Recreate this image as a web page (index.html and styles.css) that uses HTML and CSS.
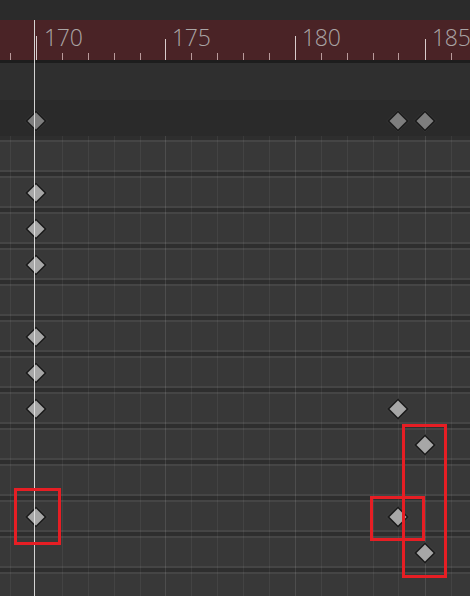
FILE: index.html
```html
<!DOCTYPE html>
<html>
<head>
<meta charset="utf-8">
<link rel="stylesheet" href="styles.css">
</head>
<body>
<div class="timeline">
  <div class="topbar"></div>
  <div class="ruler">
    <svg class="ticks" width="470" height="40" viewBox="0 0 470 40">
      <g stroke="#b99a9b" stroke-width="1">
        <line x1="10.5" y1="33" x2="10.5" y2="40"/>
        <line x1="62.5" y1="33" x2="62.5" y2="40"/>
        <line x1="88.5" y1="33" x2="88.5" y2="40"/>
        <line x1="114.5" y1="33" x2="114.5" y2="40"/>
        <line x1="140.5" y1="33" x2="140.5" y2="40"/>
        <line x1="191.5" y1="33" x2="191.5" y2="40"/>
        <line x1="217.5" y1="33" x2="217.5" y2="40"/>
        <line x1="243.5" y1="33" x2="243.5" y2="40"/>
        <line x1="269.5" y1="33" x2="269.5" y2="40"/>
        <line x1="321.5" y1="33" x2="321.5" y2="40"/>
        <line x1="347.5" y1="33" x2="347.5" y2="40"/>
        <line x1="373.5" y1="33" x2="373.5" y2="40"/>
        <line x1="398.5" y1="33" x2="398.5" y2="40"/>
        <line x1="451.5" y1="33" x2="451.5" y2="40"/>
      </g>
      <g stroke="#d9cccc" stroke-width="1">
        <line x1="36.5" y1="16" x2="36.5" y2="40"/>
        <line x1="165.5" y1="19" x2="165.5" y2="40"/>
        <line x1="295.5" y1="16" x2="295.5" y2="40"/>
        <line x1="425.5" y1="19" x2="425.5" y2="40"/>
      </g>
    </svg>
    <span class="label" style="left:44px">170</span>
    <span class="label" style="left:172px">175</span>
    <span class="label" style="left:302px">180</span>
    <span class="label" style="left:432px">185</span>
  </div>
  <div class="header-row"></div>
  <div class="summary-row">
    <i class="key key-dim" style="left:36px"></i>
    <i class="key key-dim" style="left:398px"></i>
    <i class="key key-dim" style="left:425px"></i>
  </div>
  <div class="tracks">
    <svg class="grid" width="470" height="460" viewBox="0 0 470 460">
      <g stroke="rgba(255,255,255,0.06)" stroke-width="1">
        <line x1="10.5" y1="0" x2="10.5" y2="460"/>
        <line x1="62.5" y1="0" x2="62.5" y2="460"/>
        <line x1="88.5" y1="0" x2="88.5" y2="460"/>
        <line x1="114.5" y1="0" x2="114.5" y2="460"/>
        <line x1="140.5" y1="0" x2="140.5" y2="460"/>
        <line x1="191.5" y1="0" x2="191.5" y2="460"/>
        <line x1="217.5" y1="0" x2="217.5" y2="460"/>
        <line x1="243.5" y1="0" x2="243.5" y2="460"/>
        <line x1="269.5" y1="0" x2="269.5" y2="460"/>
        <line x1="321.5" y1="0" x2="321.5" y2="460"/>
        <line x1="347.5" y1="0" x2="347.5" y2="460"/>
        <line x1="373.5" y1="0" x2="373.5" y2="460"/>
        <line x1="398.5" y1="0" x2="398.5" y2="460"/>
        <line x1="451.5" y1="0" x2="451.5" y2="460"/>
      </g>
      <g stroke="rgba(255,255,255,0.11)" stroke-width="1">
        <line x1="165.5" y1="0" x2="165.5" y2="460"/>
        <line x1="295.5" y1="0" x2="295.5" y2="460"/>
        <line x1="425.5" y1="0" x2="425.5" y2="460"/>
      </g>
    </svg>
    <div class="row"></div>
    <div class="row"><i class="key" style="left:36px"></i></div>
    <div class="row"><i class="key" style="left:36px"></i></div>
    <div class="row"><i class="key" style="left:36px"></i></div>
    <div class="row"></div>
    <div class="row"><i class="key" style="left:36px"></i></div>
    <div class="row"><i class="key" style="left:36px"></i></div>
    <div class="row"><i class="key" style="left:36px"></i><i class="key" style="left:398px"></i></div>
    <div class="row"><i class="key" style="left:425px"></i></div>
    <div class="row"></div>
    <div class="row"><i class="key" style="left:36px"></i><i class="key" style="left:398px"></i></div>
    <div class="row"><i class="key" style="left:425px"></i></div>
    <div class="row"></div>
  </div>
  <div class="playhead"></div>
  <div class="mark" style="left:14px;top:488px;width:47px;height:57px"></div>
  <div class="mark" style="left:370px;top:496px;width:55px;height:45px"></div>
  <div class="mark" style="left:402px;top:424px;width:45px;height:154px"></div>
</div>
</body>
</html>
```
FILE: styles.css
```css
* { box-sizing: border-box; }
html, body { margin: 0; padding: 0; background: #2b2b2b; }
.timeline {
  position: relative;
  width: 470px;
  height: 596px;
  overflow: hidden;
  display: flex;
  flex-direction: column;
  background: #2e2e2e;
  font-family: "Open Sans", "Liberation Sans", sans-serif;
}
.topbar { height: 20px; flex: none; background: #2b2b2b; }
.ruler {
  position: relative;
  height: 43px;
  flex: none;
  background: #4a2326;
  border-bottom: 3px solid #1d1d1d;
}
.ticks { position: absolute; left: 0; top: 0; display: block; }
.label {
  position: absolute;
  top: 6px;
  font-size: 23px;
  line-height: 23px;
  font-weight: 300;
  color: #aaa5a5;
  letter-spacing: -0.3px;
}
.header-row { height: 37px; flex: none; background: #2f2f2f; }
.summary-row {
  position: relative;
  height: 36px;
  flex: none;
  background: #2a2a2a;
}
.summary-row .key { top: 21px; }
.tracks {
  position: relative;
  flex: 1;
  display: flex;
  flex-direction: column;
  gap: 4px;
  padding-top: 4px;
  background: #2e2e2e;
}
.grid { position: absolute; left: 0; top: 0; z-index: 2; pointer-events: none; }
.row {
  position: relative;
  flex: none;
  height: 32px;
  background: #383838;
  border-top: 2px solid #454545;
  border-bottom: 2px solid #454545;
}
.key {
  position: absolute;
  top: 15px;
  width: 16px;
  height: 16px;
  margin-left: -8px;
  margin-top: -8px;
  background: #a7a7a7;
  border: 2px solid #1c1c1c;
  transform: rotate(45deg);
  z-index: 3;
}
.key-dim { background: #7e7e7e; }
.playhead {
  position: absolute;
  left: 34px;
  top: 20px;
  bottom: 0;
  width: 1px;
  background: #e6e6e6;
  z-index: 5;
  opacity: 0.9;
}
.mark {
  position: absolute;
  border: 3px solid #e61e24;
  z-index: 6;
}
```
